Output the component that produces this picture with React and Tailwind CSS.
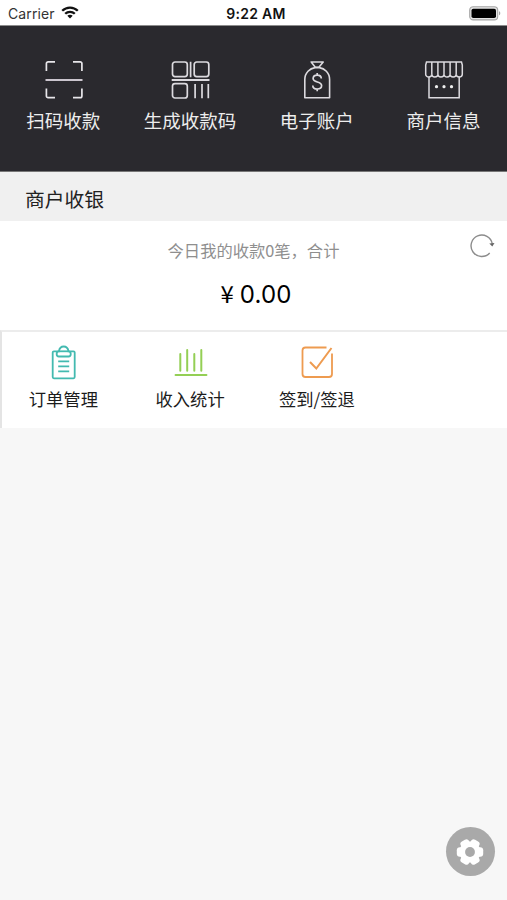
const ScanIcon = () => (
  <svg viewBox="0 0 40 40" className="w-10 h-10" fill="none" stroke="#e8e6ea" strokeWidth="1.7">
    <path d="M3.400 11V3.500a1.700 1.700 0 0 1 1.700-1.700H12M30 1.800h7.200a1.700 1.700 0 0 1 1.700 1.700V11M38.900 28.500v7.400a1.700 1.700 0 0 1-1.700 1.700H30M12 37.600H5.100a1.700 1.700 0 0 1-1.700-1.700v-7.400" />
    <path d="M2.500 20h37" stroke="#cbc5ce" strokeWidth="2" />
  </svg>
);

const QrIcon = () => (
  <svg viewBox="0 0 40 40" className="w-10 h-10" fill="none" stroke="#dcdadf" strokeWidth="1.700">
    <rect x="2.500" y="2" width="14.800" height="14.600" rx="2.500" />
    <rect x="24.200" y="2" width="14.600" height="14.600" rx="2.500" />
    <rect x="2.500" y="23.600" width="14.800" height="14.400" rx="2.500" />
    <path d="M20.600 1.800v15.400M25.100 24v14.300M32 24v14.300M38.300 24v14.300" />
    <path d="M1.700 20H39.500" strokeWidth="1.900" />
  </svg>
);

const MoneyBagIcon = () => (
  <svg viewBox="0 0 40 40" className="w-10 h-10" fill="none" stroke="#dcdadf" strokeWidth="1.600">
    <path d="M14.200 2h12l-4.300 5.200h-3.600z" strokeLinejoin="round" />
    <path d="M7.800 37.700V19.500C7.800 12.500 13 8.500 18 7.600h4.400c5 .9 10.200 4.900 10.200 11.900v18.200z" strokeLinejoin="round" />
    <path d="M24.300 18.500c0-2-1.600-3.400-4.100-3.400s-4.100 1.400-4.100 3.500c0 4.500 8.500 2.300 8.500 6.900 0 2.100-1.800 3.500-4.400 3.500s-4.400-1.400-4.400-3.600M20.200 13v2.500M20.200 29v2.300" strokeWidth="1.700" />
  </svg>
);

const ShopIcon = () => (
  <svg viewBox="0 0 40 40" className="w-10 h-10" fill="none" stroke="#dcdadf" strokeWidth="1.500">
    <path d="M2.500 2h35l.8 3v9.200c0 3.600-6.100 3.600-6.100 0 0 3.600-6.100 3.600-6.100 0 0 3.600-6.100 3.600-6.100 0 0 3.600-6.100 3.600-6.100 0 0 3.600-6.100 3.600-6.100 0 0 3.600-6.100 3.600-6.100 0V5z" />
    <path d="M7.800 2v12.500M13.900 2v12.500M20 2v12.500M26.100 2v12.500M32.200 2v12.500" />
    <path d="M5 16.800v21h30.200v-21" />
    <g fill="#eeeeee" stroke="none">
      <circle cx="12.500" cy="26.700" r="1.600" />
      <circle cx="20" cy="26.700" r="1.600" />
      <circle cx="27.500" cy="26.700" r="1.600" />
    </g>
  </svg>
);

const OrderIcon = () => (
  <svg viewBox="0 0 36 36" className="w-9 h-9" fill="none" stroke="#43bab0" strokeWidth="1.800">
    <rect x="7.700" y="6.300" width="22" height="27" rx="1.200" />
    <path d="M13.900 6.300C14.400 3.300 16.400 1.500 18.700 1.500s4.300 1.800 4.800 4.800c3 .2 3 5 0 5.200h-9.600c-3-.2-3-5 0-5.200z" fill="white" />
    <path d="M13.900 6.300h9.600" />
    <path d="M13.200 16.300h11M13.200 21.300h11M13.200 26.300h11" />
  </svg>
);

const StatsIcon = () => (
  <svg viewBox="0 0 36 36" className="w-9 h-9" fill="none" stroke="#94cf55" strokeWidth="2" strokeLinecap="round">
    <path d="M8.300 9v16.800M15.200 5v20.800M22.300 9v16.800M29.300 5v20.800" />
    <path d="M3.500 30h31" strokeWidth="1.900" />
  </svg>
);

const CheckInIcon = () => (
  <svg viewBox="0 0 36 36" className="w-9 h-9" fill="none" stroke="#ee9b50" strokeWidth="1.800">
    <path d="M27.500 2.500H6.500a3 3 0 0 0-3 3v23.500a3 3 0 0 0 3 3h23.500a3 3 0 0 0 3-3V8.500" />
    <path d="M11 17l6.300 6.500L32.500 3" strokeWidth="2" />
  </svg>
);

const GearIcon = () => (
  <svg viewBox="0 0 28 28" className="w-7 h-7 -ml-px" fill="white">
    <circle cx="14" cy="14" r="10.600" />
    <rect x=".8" y="9.300" width="26.400" height="9.400" rx="3" />
    <rect x=".8" y="9.300" width="26.400" height="9.400" rx="3" transform="rotate(60 14 14)" />
    <rect x=".8" y="9.300" width="26.400" height="9.400" rx="3" transform="rotate(120 14 14)" />
    <circle cx="14" cy="14" r="4.900" fill="#a9a9a9" />
  </svg>
);

const topActions = [
  { label: '扫码收款', Icon: ScanIcon },
  { label: '生成收款码', Icon: QrIcon },
  { label: '电子账户', Icon: MoneyBagIcon },
  { label: '商户信息', Icon: ShopIcon },
];

const shortcuts = [
  { label: '订单管理', Icon: OrderIcon },
  { label: '收入统计', Icon: StatsIcon },
  { label: '签到/签退', Icon: CheckInIcon },
];

function StatusBar() {
  return (
    <div className="h-[26px] grid grid-cols-3 items-center bg-white border-b border-[#8c8c8c] pl-2 pr-1.5 font-['Inter','Liberation_Sans',sans-serif] text-[14px] text-[#333]">
      <div className="flex items-center gap-1.5 pt-0.5">
        <span className="tracking-[0.1px]">Carrier</span>
        <svg viewBox="0 0 18 13" className="w-[18px] h-[13px] -mt-0.5" fill="none" stroke="#111" strokeWidth="2.300">
          <path d="M1.200 4.800c4.400-4.300 11.200-4.300 15.600 0M4.200 7.800c2.700-2.700 6.900-2.700 9.600 0" />
          <path d="M9 12.500L6.300 9.800c1.500-1.500 3.900-1.500 5.400 0z" fill="#111" stroke="none" />
        </svg>
      </div>
      <div className="text-center font-semibold text-[#111] pt-0.5 pl-[3px] tracking-[0.3px] whitespace-nowrap">9:22 AM</div>
      <svg viewBox="0 0 32 15" className="w-8 h-[15px] mt-px justify-self-end">
        <rect x=".700" y=".700" width="28" height="13.200" rx="3.500" fill="#e4e4e4" stroke="#a5a5a5" strokeWidth="1.100" />
        <rect x="2.500" y="2.700" width="24.500" height="9.300" rx="1.800" fill="#000" />
        <path d="M30 5.300c1.700.5 1.700 3.500 0 4z" fill="#a5a5a5" />
      </svg>
    </div>
  );
}

export default function App() {
  return (
    <div className="relative w-full h-[900px] bg-[#f7f7f7] overflow-hidden font-['Noto_Sans_CJK_SC',sans-serif]">
      <StatusBar />

      {/* Main actions */}
      <div className="h-[146px] grid grid-cols-4 bg-[#2a292e] pt-[34px] border-b border-[#777]">
        {topActions.map(({ label, Icon }) => (
          <div key={label} className="flex flex-col items-center">
            <Icon />
            <span className="mt-[7px] text-[18.500px] leading-[26px] text-[#ededed] whitespace-nowrap">{label}</span>
          </div>
        ))}
      </div>

      <div className="h-[49px] flex items-center bg-[#f0f0f0] pl-[25px] pt-1 text-[19.800px] text-[#222]">
        商户收银
      </div>

      {/* Today's total */}
      <div className="h-[109px] grid grid-cols-[60px_1fr_60px] bg-white">
        <div />
        <div className="flex flex-col items-center pt-[17px]">
          <p className="text-[16.300px] leading-6 text-[#8f8f8f]">今日我的收款0笔，合计</p>
          <p className="mt-[17px] pl-[5px] flex items-center gap-[6px] text-[24px] leading-8 text-black font-['Inter','Noto_Sans_CJK_SC',sans-serif]">
            <span className="-mt-1 text-[24px] font-['Noto_Sans_CJK_SC',sans-serif]">¥</span>
            <span className="tracking-[0.2px]">0.00</span>
          </p>
        </div>
        <svg viewBox="0 0 28 28" className="w-7 h-7 mt-[11px] ml-[21px]" fill="none" stroke="#8c8c8c" strokeWidth="1.400">
          <path d="M21.700 21A10.700 10.700 0 1 1 24.300 12" />
          <path d="M21.300 11.500l5.200-.5-2.200 3.600z" fill="#666" stroke="none" />
        </svg>
      </div>

      {/* Shortcuts */}
      <div className="h-[98px] bg-white border-t-2 border-l-2 border-t-[#ececec] border-l-[#e4e4e4] pt-[13px]">
        <div className="-ml-0.5 grid grid-cols-4">
          {shortcuts.map(({ label, Icon }) => (
            <div key={label} className="flex flex-col items-center">
              <Icon />
              <span className="mt-1.5 text-[17.300px] leading-6 text-[#1c1c1c] whitespace-nowrap">{label}</span>
            </div>
          ))}
        </div>
      </div>

      {/* Floating settings button */}
      <button className="absolute left-[446px] top-[827px] w-[49px] h-[49px] rounded-full bg-[#a9a9a9] flex items-center justify-center">
        <GearIcon />
      </button>
    </div>
  );
}
